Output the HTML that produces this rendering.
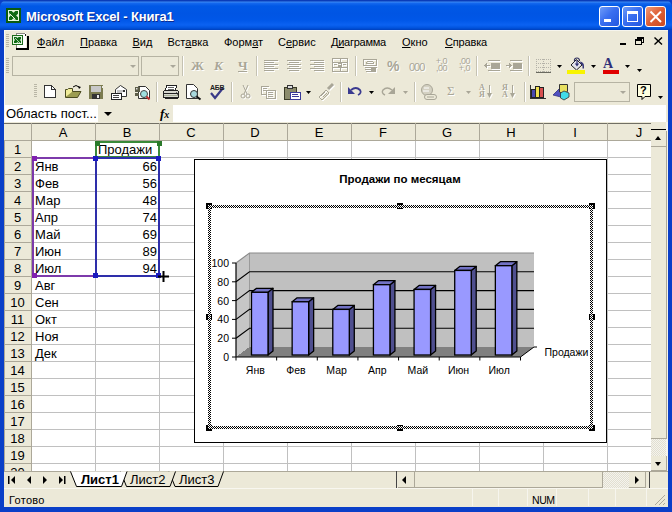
<!DOCTYPE html><html><head><meta charset="utf-8"><style>
*{margin:0;padding:0;box-sizing:border-box}
html,body{width:672px;height:512px;overflow:hidden;background:#0a3fc8;font-family:"Liberation Sans",sans-serif;font-size:11px;color:#000}
.a{position:absolute}
#title{left:0;top:0;width:672px;height:30px;border-radius:7px 7px 0 0;
 background:linear-gradient(#0a3cb8 0px,#0a3cb8 1px,#3d8cf5 2px,#1669ee 3px,#0058e6 6px,#0055e4 14px,#0057e8 20px,#0b62f2 25px,#0052dc 28px,#0040bc 30px)}
#ttext{left:26px;top:10px;color:#fff;font-weight:bold;font-size:13px;letter-spacing:-0.15px;text-shadow:1px 1px 0 #0c2a90;white-space:nowrap}
.wb{top:6px;width:21px;height:21px;border:1px solid #fff;border-radius:3px}
.t{white-space:nowrap;line-height:1}
.mi{top:37px;font-size:11px}
u{text-decoration-thickness:1px;text-underline-offset:1px}
.hl{height:1px;background:#c0c0c0}
.vl{width:1px;background:#c0c0c0}
.ch{top:126px;font-size:13px;text-align:center}
.rh{left:4px;width:27px;font-size:13px;text-align:center}
.c{font-size:13px}
.sep{width:2px;border-left:1px solid #c5c2b2;border-right:1px solid #fff}
.grip{width:3px;background:repeating-linear-gradient(#b9b6a6 0 1px,transparent 1px 2px)}
.dd{width:0;height:0;border-left:3px solid transparent;border-right:3px solid transparent;border-top:3px solid #000}
</style></head><body>
<div id="title" class="a">
<svg class="a" style="left:6px;top:8px" width="16" height="16" viewBox="0 0 16 16"><rect x="0" y="0" width="15" height="15" fill="#0a5a10"/><rect x="2" y="2" width="11" height="11" fill="#e6f6de"/><clipPath id="ic1"><rect x="3" y="3" width="9" height="9"/></clipPath><path d="M2 2L13 13M13 2L2 13" stroke="#0d6a14" stroke-width="3.8" clip-path="url(#ic1)"/><path d="M3.5 5.5L9.5 11.5" stroke="#e6f6de" stroke-width="1"/></svg>
<div id="ttext" class="a t">Microsoft Excel - Книга1</div>
<div class="a wb" style="left:599px;background:linear-gradient(135deg,#6f9cf8,#3a6ff0 45%,#2358e0)"><div class="a" style="left:4px;top:12px;width:7px;height:3px;background:#fff"></div></div>
<div class="a wb" style="left:622px;background:linear-gradient(135deg,#6f9cf8,#3a6ff0 45%,#2358e0)"><div class="a" style="left:4px;top:4px;width:11px;height:11px;border:1px solid #fff;border-top-width:3px"></div></div>
<div class="a wb" style="left:645px;background:linear-gradient(135deg,#f09a78,#dd5e34 50%,#c94a22)"><svg class="a" style="left:3px;top:3px" width="14" height="14"><path d="M1.5 1.5L12 12M12 1.5L1.5 12" stroke="#fff" stroke-width="2"/></svg></div>
</div>
<div class="a" style="left:4px;top:30px;width:664px;height:477px;background:#ece9d8;border-top:1px solid #f6f5ee"></div>
<div class="a grip" style="left:6px;top:34px;height:14px"></div>
<svg class="a" style="left:12px;top:33px" width="18" height="17" viewBox="0 0 18 17" shape-rendering="crispEdges"><rect x="4" y="0" width="10" height="15" fill="#fff"/><rect x="4" y="0" width="9" height="1" fill="#8a8a80"/><rect x="4" y="0" width="1" height="15" fill="#8a8a80"/><rect x="13" y="1" width="1" height="2" fill="#222"/><rect x="15" y="3" width="2" height="14" fill="#000"/><rect x="4" y="15" width="13" height="2" fill="#000"/><rect x="0" y="2" width="11" height="10" fill="#1a6a1a"/><rect x="1" y="3" width="9" height="8" fill="#e8f8e4"/><clipPath id="ic2"><rect x="2" y="4" width="7" height="6"/></clipPath><path d="M1 3L10 11M10 3L1 11" stroke="#0d6a14" stroke-width="3" clip-path="url(#ic2)" shape-rendering="geometricPrecision"/><path d="M3 5L8 10" stroke="#d8f0d4" stroke-width="0.8" shape-rendering="geometricPrecision"/></svg>
<div class="a t mi" style="left:37px;letter-spacing:0px"><u>Ф</u>айл</div>
<div class="a t mi" style="left:80px;letter-spacing:0px"><u>П</u>равка</div>
<div class="a t mi" style="left:132.5px;letter-spacing:0px"><u>В</u>ид</div>
<div class="a t mi" style="left:167.5px;letter-spacing:0px">Вст<u>а</u>вка</div>
<div class="a t mi" style="left:224px;letter-spacing:0px">Форм<u>а</u>т</div>
<div class="a t mi" style="left:278px;letter-spacing:0px">С<u>е</u>рвис</div>
<div class="a t mi" style="left:331px;letter-spacing:-0.25px">Д<u>и</u>аграмма</div>
<div class="a t mi" style="left:402px;letter-spacing:0px"><u>О</u>кно</div>
<div class="a t mi" style="left:445px;letter-spacing:-0.17px"><u>С</u>правка</div>
<div class="a" style="left:620px;top:43px;width:6px;height:2px;background:#000"></div>
<svg class="a" style="left:635px;top:37px" width="9" height="8"><rect x="2.5" y="0.5" width="6" height="5" fill="none" stroke="#000"/><rect x="2" y="0" width="7" height="2" fill="#000"/><rect x="0.5" y="2.5" width="6" height="5" fill="#ece9d8" stroke="#000"/><rect x="0" y="2" width="7" height="2" fill="#000"/></svg>
<svg class="a" style="left:654px;top:37px" width="9" height="8"><path d="M0.5 0.5L8 7.5M8 0.5L0.5 7.5" stroke="#000" stroke-width="1.4"/></svg>
<div class="a" style="left:5px;top:53px;width:643px;height:25px;background:#ece9d8"></div>
<div class="a grip" style="left:6px;top:58px;height:15px"></div>
<div class="a" style="left:12px;top:56px;width:127px;height:20px;border:1px solid #b6b3a3;background:#ece9d8"></div>
<div class="a" style="left:141px;top:56px;width:38px;height:20px;border:1px solid #b6b3a3;background:#ece9d8"></div>
<div class="a dd" style="left:130px;top:65px;border-top-color:#aaa79a"></div>
<div class="a dd" style="left:170px;top:65px;border-top-color:#aaa79a"></div>
<div class="a sep" style="left:182px;top:56px;height:20px"></div>
<div class="a sep" style="left:256px;top:56px;height:20px"></div>
<div class="a sep" style="left:355px;top:56px;height:20px"></div>
<div class="a sep" style="left:476px;top:56px;height:20px"></div>
<div class="a sep" style="left:528px;top:56px;height:20px"></div>
<div class="a" style="left:32px;top:79px;width:632px;height:25px;background:#ece9d8"></div>
<div class="a grip" style="left:34px;top:84px;height:14px"></div>
<div class="a sep" style="left:156px;top:82px;height:20px"></div>
<div class="a sep" style="left:231px;top:82px;height:20px"></div>
<div class="a sep" style="left:340px;top:82px;height:20px"></div>
<div class="a sep" style="left:414px;top:82px;height:20px"></div>
<div class="a sep" style="left:524px;top:82px;height:20px"></div>
<div class="a" style="left:574px;top:82px;width:56px;height:20px;border:1px solid #b6b3a3;background:#ece9d8"></div>
<div class="a dd" style="left:620px;top:91px;border-top-color:#aaa79a"></div>
<svg class="a" style="left:0;top:0" width="672" height="112" viewBox="0 0 672 112" shape-rendering="crispEdges">
<g transform="translate(1,1)" fill="#ffffff" stroke="none"><rect x="238" y="71" width="9" height="1"/></g>
<g fill="#a9a697" stroke="none"><rect x="238" y="71" width="9" height="1"/></g>
<g transform="translate(1,1)" fill="#ffffff" stroke="none"><rect x="264" y="60" width="14" height="1"/><rect x="264" y="62" width="10" height="1"/><rect x="264" y="64" width="14" height="1"/><rect x="264" y="66" width="10" height="1"/><rect x="264" y="68" width="14" height="1"/><rect x="264" y="70" width="10" height="1"/></g>
<g fill="#a9a697" stroke="none"><rect x="264" y="60" width="14" height="1"/><rect x="264" y="62" width="10" height="1"/><rect x="264" y="64" width="14" height="1"/><rect x="264" y="66" width="10" height="1"/><rect x="264" y="68" width="14" height="1"/><rect x="264" y="70" width="10" height="1"/></g>
<g transform="translate(1,1)" fill="#ffffff" stroke="none"><rect x="287" y="60" width="14" height="1"/><rect x="289" y="62" width="10" height="1"/><rect x="287" y="64" width="14" height="1"/><rect x="289" y="66" width="10" height="1"/><rect x="287" y="68" width="14" height="1"/><rect x="289" y="70" width="10" height="1"/></g>
<g fill="#a9a697" stroke="none"><rect x="287" y="60" width="14" height="1"/><rect x="289" y="62" width="10" height="1"/><rect x="287" y="64" width="14" height="1"/><rect x="289" y="66" width="10" height="1"/><rect x="287" y="68" width="14" height="1"/><rect x="289" y="70" width="10" height="1"/></g>
<g transform="translate(1,1)" fill="#ffffff" stroke="none"><rect x="310" y="60" width="14" height="1"/><rect x="314" y="62" width="10" height="1"/><rect x="310" y="64" width="14" height="1"/><rect x="314" y="66" width="10" height="1"/><rect x="310" y="68" width="14" height="1"/><rect x="314" y="70" width="10" height="1"/></g>
<g fill="#a9a697" stroke="none"><rect x="310" y="60" width="14" height="1"/><rect x="314" y="62" width="10" height="1"/><rect x="310" y="64" width="14" height="1"/><rect x="314" y="66" width="10" height="1"/><rect x="310" y="68" width="14" height="1"/><rect x="314" y="70" width="10" height="1"/></g>
<g transform="translate(1,1)" fill="#ffffff" stroke="none"><rect x="332" y="58" width="16" height="1"/><rect x="332" y="71" width="16" height="1"/><rect x="332" y="58" width="1" height="14"/><rect x="347" y="58" width="1" height="14"/><rect x="332" y="62" width="16" height="1"/><rect x="332" y="67" width="16" height="1"/><rect x="340" y="58" width="1" height="4"/><rect x="340" y="67" width="1" height="4"/><rect x="334" y="64" width="3" height="1"/><rect x="343" y="64" width="3" height="1"/><rect x="338" y="63" width="4" height="1"/><rect x="341" y="64" width="1" height="1"/><rect x="338" y="65" width="4" height="1"/><rect x="338" y="66" width="4" height="1"/></g>
<g fill="#a9a697" stroke="none"><rect x="332" y="58" width="16" height="1"/><rect x="332" y="71" width="16" height="1"/><rect x="332" y="58" width="1" height="14"/><rect x="347" y="58" width="1" height="14"/><rect x="332" y="62" width="16" height="1"/><rect x="332" y="67" width="16" height="1"/><rect x="340" y="58" width="1" height="4"/><rect x="340" y="67" width="1" height="4"/><rect x="334" y="64" width="3" height="1"/><rect x="343" y="64" width="3" height="1"/><rect x="338" y="63" width="4" height="1"/><rect x="341" y="64" width="1" height="1"/><rect x="338" y="65" width="4" height="1"/><rect x="338" y="66" width="4" height="1"/></g>
<g transform="translate(1,1)" fill="#ffffff" stroke="none"><rect x="363" y="59" width="14" height="1"/><rect x="363" y="59" width="1" height="7"/><rect x="376" y="59" width="1" height="7"/><rect x="363" y="65" width="14" height="1"/><rect x="367" y="61" width="6" height="1"/><rect x="366" y="62" width="1" height="2"/><rect x="373" y="62" width="1" height="2"/><rect x="367" y="63" width="6" height="1"/><rect x="365" y="67" width="12" height="1"/><rect x="365" y="69" width="6" height="1"/><rect x="371" y="68" width="5" height="4"/><rect x="366" y="71" width="5" height="1"/></g>
<g fill="#a9a697" stroke="none"><rect x="363" y="59" width="14" height="1"/><rect x="363" y="59" width="1" height="7"/><rect x="376" y="59" width="1" height="7"/><rect x="363" y="65" width="14" height="1"/><rect x="367" y="61" width="6" height="1"/><rect x="366" y="62" width="1" height="2"/><rect x="373" y="62" width="1" height="2"/><rect x="367" y="63" width="6" height="1"/><rect x="365" y="67" width="12" height="1"/><rect x="365" y="69" width="6" height="1"/><rect x="371" y="68" width="5" height="4"/><rect x="366" y="71" width="5" height="1"/></g>
<g transform="translate(1,1)" fill="#ffffff" stroke="none"><rect x="488" y="60" width="12" height="1"/><rect x="488" y="70" width="12" height="1"/><rect x="491" y="63" width="9" height="2"/><rect x="491" y="65" width="9" height="2"/><rect x="491" y="67" width="9" height="2"/><rect x="484" y="65" width="6" height="1"/><rect x="485" y="64" width="1" height="3"/><rect x="486" y="63" width="1" height="5"/></g>
<g fill="#a9a697" stroke="none"><rect x="488" y="60" width="12" height="1"/><rect x="488" y="70" width="12" height="1"/><rect x="491" y="63" width="9" height="2"/><rect x="491" y="65" width="9" height="2"/><rect x="491" y="67" width="9" height="2"/><rect x="484" y="65" width="6" height="1"/><rect x="485" y="64" width="1" height="3"/><rect x="486" y="63" width="1" height="5"/></g>
<g transform="translate(1,1)" fill="#ffffff" stroke="none"><rect x="510" y="60" width="12" height="1"/><rect x="510" y="70" width="12" height="1"/><rect x="513" y="63" width="9" height="2"/><rect x="513" y="65" width="9" height="2"/><rect x="513" y="67" width="9" height="2"/><rect x="506" y="65" width="6" height="1"/><rect x="510" y="64" width="1" height="3"/><rect x="509" y="63" width="1" height="5"/></g>
<g fill="#a9a697" stroke="none"><rect x="510" y="60" width="12" height="1"/><rect x="510" y="70" width="12" height="1"/><rect x="513" y="63" width="9" height="2"/><rect x="513" y="65" width="9" height="2"/><rect x="513" y="67" width="9" height="2"/><rect x="506" y="65" width="6" height="1"/><rect x="510" y="64" width="1" height="3"/><rect x="509" y="63" width="1" height="5"/></g>
<g fill="#b4b2a8"><rect x="536" y="59" width="1" height="1"/><rect x="538" y="59" width="1" height="1"/><rect x="540" y="59" width="1" height="1"/><rect x="542" y="59" width="1" height="1"/><rect x="544" y="59" width="1" height="1"/><rect x="546" y="59" width="1" height="1"/><rect x="548" y="59" width="1" height="1"/><rect x="550" y="59" width="1" height="1"/><rect x="536" y="63" width="1" height="1"/><rect x="538" y="63" width="1" height="1"/><rect x="540" y="63" width="1" height="1"/><rect x="542" y="63" width="1" height="1"/><rect x="544" y="63" width="1" height="1"/><rect x="546" y="63" width="1" height="1"/><rect x="548" y="63" width="1" height="1"/><rect x="550" y="63" width="1" height="1"/><rect x="536" y="67" width="1" height="1"/><rect x="538" y="67" width="1" height="1"/><rect x="540" y="67" width="1" height="1"/><rect x="542" y="67" width="1" height="1"/><rect x="544" y="67" width="1" height="1"/><rect x="546" y="67" width="1" height="1"/><rect x="548" y="67" width="1" height="1"/><rect x="550" y="67" width="1" height="1"/><rect x="536" y="71" width="1" height="1"/><rect x="538" y="71" width="1" height="1"/><rect x="540" y="71" width="1" height="1"/><rect x="542" y="71" width="1" height="1"/><rect x="544" y="71" width="1" height="1"/><rect x="546" y="71" width="1" height="1"/><rect x="548" y="71" width="1" height="1"/><rect x="550" y="71" width="1" height="1"/><rect x="536" y="59" width="1" height="1"/><rect x="536" y="61" width="1" height="1"/><rect x="536" y="63" width="1" height="1"/><rect x="536" y="65" width="1" height="1"/><rect x="536" y="67" width="1" height="1"/><rect x="536" y="69" width="1" height="1"/><rect x="536" y="71" width="1" height="1"/><rect x="543" y="59" width="1" height="1"/><rect x="543" y="61" width="1" height="1"/><rect x="543" y="63" width="1" height="1"/><rect x="543" y="65" width="1" height="1"/><rect x="543" y="67" width="1" height="1"/><rect x="543" y="69" width="1" height="1"/><rect x="543" y="71" width="1" height="1"/><rect x="550" y="59" width="1" height="1"/><rect x="550" y="61" width="1" height="1"/><rect x="550" y="63" width="1" height="1"/><rect x="550" y="65" width="1" height="1"/><rect x="550" y="67" width="1" height="1"/><rect x="550" y="69" width="1" height="1"/><rect x="550" y="71" width="1" height="1"/></g>
<rect x="536" y="72" width="15" height="1" fill="#6a6a60"/>
<polygon points="557,65 562,65 559.5,68" fill="#000" shape-rendering="geometricPrecision"/>
<polygon points="591,65 596,65 593.5,68" fill="#000" shape-rendering="geometricPrecision"/>
<polygon points="625,65 630,65 627.5,68" fill="#000" shape-rendering="geometricPrecision"/>
<polygon points="637,69 642,69 639.5,72" fill="#000" shape-rendering="geometricPrecision"/>
<polygon points="306,91 311,91 308.5,94" fill="#000" shape-rendering="geometricPrecision"/>
<polygon points="369,91 374,91 371.5,94" fill="#000" shape-rendering="geometricPrecision"/>
<polygon points="658,96 663,96 660.5,99" fill="#000" shape-rendering="geometricPrecision"/>
<polygon points="403,91 408,91 405.5,94" fill="#a9a697" shape-rendering="geometricPrecision"/>
<polygon points="466,91 471,91 468.5,94" fill="#a9a697" shape-rendering="geometricPrecision"/>
<g shape-rendering="geometricPrecision"><polygon points="571,65 576.5,59.5 582,65 576.5,70" fill="#e4e4ec" stroke="#222" stroke-width="1"/><path d="M574.5 61.5 Q574 58 577 58 Q579.5 58 579.5 61" fill="none" stroke="#303060" stroke-width="1.2"/><path d="M577 60V65M575.5 63.5L577 65.5L578.5 63.5" stroke="#303070" fill="none" stroke-width="1.2"/><path d="M580 61.5Q584 62 584 66V68.5H582.5V66Q582 64 580.5 63.5Z" fill="#38387a"/></g>
<rect x="567" y="70" width="18" height="4" fill="#f8f400"/>
<rect x="603" y="70" width="16" height="4" fill="#e00000"/>
<path d="M44.5 85.5H51.5L55.5 89.5V97.5H44.5Z" fill="#fff" stroke="#333"/><path d="M51.5 85.5V89.5H55.5" fill="none" stroke="#333"/>
<g shape-rendering="geometricPrecision"><path d="M65.5 90.5V97.5H77.5L81 91.5H68.5L65.5 97" fill="#9c9c50" stroke="#4a4a20"/><path d="M65.5 97V89.5H67.5L68.5 88.5H72.5V91.5" fill="#f0ec98" stroke="#4a4a20"/><path d="M73 87 q3 -3 6 0" fill="none" stroke="#000"/><polygon points="78,86 81,87 79,89" fill="#000"/></g>
<rect x="89" y="85" width="14" height="14" fill="#7c7c50"/><rect x="91" y="86" width="10" height="6" fill="#c8c8c8"/><rect x="92" y="94" width="8" height="5" fill="#333"/><rect x="97" y="95" width="2" height="3" fill="#e8e8e8"/><rect x="102" y="86" width="1" height="2" fill="#e8e8e8"/>
<g shape-rendering="geometricPrecision"><path d="M115.5 89.5L120.5 85.5L126.5 89.5V96.5H115.5Z" fill="#fff" stroke="#333"/><path d="M117 91h7M117 93h5" stroke="#888"/><rect x="111.5" y="93.5" width="10" height="6" fill="#fff" stroke="#222"/><path d="M113 95.5h6M113 97.5h6" stroke="#444"/><rect x="123" y="90" width="2" height="2" fill="#333"/></g>
<g shape-rendering="geometricPrecision"><path d="M138.5 86.5H145.5L149.5 90.5V98.5H138.5Z" fill="#fff" stroke="#333"/><rect x="135" y="87" width="5" height="5" fill="#5c5c48"/><rect x="136" y="88" width="1.5" height="1.5" fill="#ddd"/><rect x="135" y="93" width="4" height="3" fill="#5c5c48"/><circle cx="144" cy="94" r="3.5" fill="#9fe0e0" stroke="#444"/><path d="M146.5 96.5L149.5 99.5" stroke="#c03030" stroke-width="2"/></g>
<path d="M166.5 85.5H176.5L175.5 90.5H165.5Z" fill="#fff" stroke="#222"/><path d="M168 87.5h6M167.5 89h6" stroke="#666"/><path d="M163.5 92.5Q163.5 90.5 165.5 90.5H177.5Q178.5 90.5 178.5 92.5V97.5H163.5Z" fill="#d8d8d0" stroke="#222"/><rect x="164" y="93" width="14" height="1" fill="#222"/><rect x="164" y="95" width="14" height="1" fill="#a8b098"/><rect x="164.5" y="97.5" width="13" height="1" fill="#222"/><rect x="176" y="92" width="1" height="1" fill="#666"/><rect x="177" y="94" width="1" height="1" fill="#666"/>
<g shape-rendering="geometricPrecision"><path d="M186.5 84.5H193.5L197.5 88.5V98.5H186.5Z" fill="#fff" stroke="#333"/><circle cx="194" cy="94" r="3.5" fill="#a8d8dc" stroke="#333"/><path d="M196.5 96.5L200.5 99.5" stroke="#111" stroke-width="2"/></g>
<path d="M211 93L215 98L223 88" fill="none" stroke="#3a3a88" stroke-width="2.2" shape-rendering="geometricPrecision"/>
<g shape-rendering="geometricPrecision" fill="none"><g transform="translate(1,1)" stroke="#fff"><path d="M243 85L247 94M248 85L244 94"/><circle cx="243" cy="96" r="2"/><circle cx="248" cy="96" r="2"/></g><g stroke="#a9a697"><path d="M243 85L247 94M248 85L244 94"/><circle cx="243" cy="96" r="2"/><circle cx="248" cy="96" r="2"/></g></g>
<g transform="translate(1,1)" fill="#ffffff" stroke="none"><rect x="261" y="86" width="8" height="1"/><rect x="261" y="86" width="1" height="9"/><rect x="261" y="94" width="5" height="1"/><rect x="263" y="88" width="4" height="1"/><rect x="263" y="90" width="4" height="1"/><rect x="266" y="90" width="9" height="1"/><rect x="266" y="90" width="1" height="9"/><rect x="266" y="98" width="9" height="1"/><rect x="275" y="90" width="1" height="9"/><rect x="268" y="92" width="5" height="1"/><rect x="268" y="94" width="5" height="1"/><rect x="268" y="96" width="5" height="1"/></g>
<g fill="#a9a697" stroke="none"><rect x="261" y="86" width="8" height="1"/><rect x="261" y="86" width="1" height="9"/><rect x="261" y="94" width="5" height="1"/><rect x="263" y="88" width="4" height="1"/><rect x="263" y="90" width="4" height="1"/><rect x="266" y="90" width="9" height="1"/><rect x="266" y="90" width="1" height="9"/><rect x="266" y="98" width="9" height="1"/><rect x="275" y="90" width="1" height="9"/><rect x="268" y="92" width="5" height="1"/><rect x="268" y="94" width="5" height="1"/><rect x="268" y="96" width="5" height="1"/></g>
<rect x="284" y="87" width="12" height="12" fill="#8c8c6c" stroke="#3c3c28"/><rect x="287.5" y="85.5" width="5" height="3" fill="#ddd" stroke="#333"/><rect x="290.5" y="92.5" width="10" height="7" fill="#fff" stroke="#3a3a9a"/><rect x="292" y="94" width="6" height="1" fill="#3a3a9a"/><rect x="292" y="96" width="7" height="1" fill="#3a3a9a"/>
<g shape-rendering="geometricPrecision"><g transform="translate(1,1)"><path d="M319 97L326 90L329 93L322 100Z" fill="none" stroke="#fff"/><path d="M328 89L333 84" stroke="#fff" stroke-width="3"/></g><path d="M319 97L326 90L329 93L322 100Z" fill="none" stroke="#a9a697"/><path d="M321 96l4-4M323 97l4-4" stroke="#a9a697"/><path d="M328 89L333 84" stroke="#a9a697" stroke-width="3"/></g>
<g shape-rendering="geometricPrecision"><path d="M351 90 q5 -4 9 0 q2 3 -2 5" fill="none" stroke="#3a3a90" stroke-width="1.8"/><polygon points="348,87 348,94 355,94" fill="#3a3a90"/></g>
<g shape-rendering="geometricPrecision"><path d="M392 90 q-5 -4 -9 0 q-2 3 2 5" fill="none" stroke="#a9a697" stroke-width="1.4"/><polygon points="395,87 395,94 388,94" fill="#a9a697"/></g>
<g shape-rendering="geometricPrecision" fill="none"><circle cx="427" cy="90" r="5.5" stroke="#a9a697" fill="#d4d1c2"/><path d="M424 88h5M423 91h6" stroke="#fff"/><rect x="424.5" y="94.5" width="12" height="5" rx="2.5" stroke="#a9a697" fill="#ece9d8"/><path d="M427 97h7" stroke="#a9a697"/></g>
<g transform="translate(1,1)" fill="#ffffff" stroke="none"><rect x="489" y="85" width="1" height="11"/><polygon points="487,93 492,93 489.5,98" shape-rendering="geometricPrecision"/></g>
<g fill="#a9a697" stroke="none"><rect x="489" y="85" width="1" height="11"/><polygon points="487,93 492,93 489.5,98" shape-rendering="geometricPrecision"/></g>
<g transform="translate(1,1)" fill="#ffffff" stroke="none"><rect x="512" y="85" width="1" height="11"/><polygon points="510,93 515,93 512.5,98" shape-rendering="geometricPrecision"/></g>
<g fill="#a9a697" stroke="none"><rect x="512" y="85" width="1" height="11"/><polygon points="510,93 515,93 512.5,98" shape-rendering="geometricPrecision"/></g>
<rect x="530" y="85" width="1" height="14" fill="#333"/><rect x="530" y="98" width="16" height="1" fill="#333"/><rect x="531.5" y="89.5" width="4" height="8" fill="#4848b0" stroke="#222"/><rect x="535.5" y="86.5" width="4" height="11" fill="#f0e050" stroke="#222"/><rect x="539.5" y="87.5" width="4" height="10" fill="#d85050" stroke="#222"/>
<g shape-rendering="geometricPrecision"><polygon points="553,95 560,88 561,97" fill="#5050c0" stroke="#303080" stroke-width="0.8"/><polygon points="559.5,84.5 567.5,84.5 567.5,91.5 563,94 559.5,92" fill="#e8e060" stroke="#333" stroke-width="1"/><polygon points="560.5,93 564,91 569,93 569,97 564,100 560.5,98" fill="#40dce8" stroke="#333" stroke-width="0.8"/></g>
<g shape-rendering="geometricPrecision"><path d="M637.5 84.5H650.5V96.5H645L642 99.5V96.5H637.5Z" fill="#ffffe0" stroke="#000"/></g>
</svg>
<div class="a t" style="left:192px;top:60px;color:#fff;font-family:'Liberation Serif',serif;font-weight:bold;font-size:13px">Ж</div>
<div class="a t" style="left:191px;top:59px;color:#a9a697;font-family:'Liberation Serif',serif;font-weight:bold;font-size:13px">Ж</div>
<div class="a t" style="left:215px;top:60px;color:#fff;font-family:'Liberation Serif',serif;font-weight:bold;font-style:italic;font-size:13px">К</div>
<div class="a t" style="left:214px;top:59px;color:#a9a697;font-family:'Liberation Serif',serif;font-weight:bold;font-style:italic;font-size:13px">К</div>
<div class="a t" style="left:239px;top:60px;color:#fff;font-family:'Liberation Serif',serif;font-weight:bold;font-size:13px">Ч</div>
<div class="a t" style="left:238px;top:59px;color:#a9a697;font-family:'Liberation Serif',serif;font-weight:bold;font-size:13px">Ч</div>
<div class="a t" style="left:388px;top:60px;color:#fff;font-size:14px;font-weight:bold">%</div>
<div class="a t" style="left:387px;top:59px;color:#a9a697;font-size:14px;font-weight:bold">%</div>
<div class="a t" style="left:410px;top:63px;color:#fff;font-size:11px;letter-spacing:-1px">000</div>
<div class="a t" style="left:409px;top:62px;color:#a9a697;font-size:11px;letter-spacing:-1px">000</div>
<div class="a t" style="left:433px;top:59px;color:#fff;font-size:9px;line-height:7px;letter-spacing:-0.5px;width:15px;text-align:right">+,0<br>,00</div>
<div class="a t" style="left:432px;top:58px;color:#a9a697;font-size:9px;line-height:7px;letter-spacing:-0.5px;width:15px;text-align:right">+,0<br>,00</div>
<div class="a t" style="left:456px;top:59px;color:#fff;font-size:9px;line-height:7px;letter-spacing:-0.5px;width:15px;text-align:right">,00<br>+,0</div>
<div class="a t" style="left:455px;top:58px;color:#a9a697;font-size:9px;line-height:7px;letter-spacing:-0.5px;width:15px;text-align:right">,00<br>+,0</div>
<div class="a t" style="left:603px;top:57px;color:#303078;font-family:'Liberation Serif',serif;font-weight:bold;font-size:14px">A</div>
<div class="a t" style="left:210px;top:84px;color:#222;font-size:7px;font-weight:bold;letter-spacing:-0.3px">АБВ</div>
<div class="a t" style="left:448px;top:85px;color:#fff;font-size:13px;font-family:'Liberation Serif',serif">&Sigma;</div>
<div class="a t" style="left:447px;top:84px;color:#a9a697;font-size:13px;font-family:'Liberation Serif',serif">&Sigma;</div>
<div class="a t" style="left:480px;top:85px;color:#fff;font-size:8px;line-height:7px;font-family:'Liberation Serif',serif;font-weight:bold">А<br>Я</div>
<div class="a t" style="left:479px;top:84px;color:#a9a697;font-size:8px;line-height:7px;font-family:'Liberation Serif',serif;font-weight:bold">А<br>Я</div>
<div class="a t" style="left:503px;top:85px;color:#fff;font-size:8px;line-height:7px;font-family:'Liberation Serif',serif;font-weight:bold">Я<br>А</div>
<div class="a t" style="left:502px;top:84px;color:#a9a697;font-size:8px;line-height:7px;font-family:'Liberation Serif',serif;font-weight:bold">Я<br>А</div>
<div class="a t" style="left:640px;top:85px;color:#000;font-size:11px;font-weight:bold">?</div>
<div class="a" style="left:4px;top:104px;width:664px;height:19px;background:#ece9d8"></div>
<div class="a" style="left:5px;top:105px;width:93px;height:17px;background:#fff"></div>
<div class="a t c" style="left:6px;top:107px;">Область пост...</div>
<div class="a dd" style="left:104px;top:112px;border-left-width:4px;border-right-width:4px;border-top-width:4px"></div>
<div class="a t" style="left:160px;top:108px;font-family:'Liberation Serif',serif;font-style:italic;font-weight:bold;font-size:13px;top:107px">f<span style="font-size:10px">x</span></div>
<div class="a" style="left:173px;top:105px;width:493px;height:17px;background:#fff"></div>
<div class="a" style="left:4px;top:31px;width:1px;height:91px;background:#f8f8f4"></div>
<div class="a" style="left:4px;top:123px;width:647px;height:348px;background:#fff"></div>
<div class="a" style="left:4px;top:123px;width:647px;height:18px;background:#ece9d8;border-top:1px solid #716f64;border-bottom:1px solid #aca899"></div>
<div class="a" style="left:4px;top:141px;width:28px;height:330px;background:#ece9d8;border-left:1px solid #aca899;border-right:1px solid #aca899"></div>
<div class="a" style="left:31px;top:123px;width:1px;height:18px;background:#aca899"></div>
<div class="a vl" style="left:95px;top:123px;height:17px;background:#aca899"></div>
<div class="a vl" style="left:95px;top:141px;height:330px"></div>
<div class="a t ch" style="left:31px;width:64px">A</div>
<div class="a vl" style="left:159px;top:123px;height:17px;background:#aca899"></div>
<div class="a vl" style="left:159px;top:141px;height:330px"></div>
<div class="a t ch" style="left:95px;width:64px">B</div>
<div class="a vl" style="left:223px;top:123px;height:17px;background:#aca899"></div>
<div class="a vl" style="left:223px;top:141px;height:330px"></div>
<div class="a t ch" style="left:159px;width:64px">C</div>
<div class="a vl" style="left:287px;top:123px;height:17px;background:#aca899"></div>
<div class="a vl" style="left:287px;top:141px;height:330px"></div>
<div class="a t ch" style="left:223px;width:64px">D</div>
<div class="a vl" style="left:351px;top:123px;height:17px;background:#aca899"></div>
<div class="a vl" style="left:351px;top:141px;height:330px"></div>
<div class="a t ch" style="left:287px;width:64px">E</div>
<div class="a vl" style="left:415px;top:123px;height:17px;background:#aca899"></div>
<div class="a vl" style="left:415px;top:141px;height:330px"></div>
<div class="a t ch" style="left:351px;width:64px">F</div>
<div class="a vl" style="left:479px;top:123px;height:17px;background:#aca899"></div>
<div class="a vl" style="left:479px;top:141px;height:330px"></div>
<div class="a t ch" style="left:415px;width:64px">G</div>
<div class="a vl" style="left:543px;top:123px;height:17px;background:#aca899"></div>
<div class="a vl" style="left:543px;top:141px;height:330px"></div>
<div class="a t ch" style="left:479px;width:64px">H</div>
<div class="a vl" style="left:607px;top:123px;height:17px;background:#aca899"></div>
<div class="a vl" style="left:607px;top:141px;height:330px"></div>
<div class="a t ch" style="left:543px;width:64px">I</div>
<div class="a t ch" style="left:607px;width:64px">J</div>
<div class="a hl" style="left:4px;top:157px;width:28px;background:#aca899"></div>
<div class="a hl" style="left:32px;top:157px;width:619px"></div>
<div class="a t rh" style="top:143px">1</div>
<div class="a hl" style="left:4px;top:174px;width:28px;background:#aca899"></div>
<div class="a hl" style="left:32px;top:174px;width:619px"></div>
<div class="a t rh" style="top:160px">2</div>
<div class="a hl" style="left:4px;top:191px;width:28px;background:#aca899"></div>
<div class="a hl" style="left:32px;top:191px;width:619px"></div>
<div class="a t rh" style="top:177px">3</div>
<div class="a hl" style="left:4px;top:208px;width:28px;background:#aca899"></div>
<div class="a hl" style="left:32px;top:208px;width:619px"></div>
<div class="a t rh" style="top:194px">4</div>
<div class="a hl" style="left:4px;top:225px;width:28px;background:#aca899"></div>
<div class="a hl" style="left:32px;top:225px;width:619px"></div>
<div class="a t rh" style="top:211px">5</div>
<div class="a hl" style="left:4px;top:242px;width:28px;background:#aca899"></div>
<div class="a hl" style="left:32px;top:242px;width:619px"></div>
<div class="a t rh" style="top:228px">6</div>
<div class="a hl" style="left:4px;top:259px;width:28px;background:#aca899"></div>
<div class="a hl" style="left:32px;top:259px;width:619px"></div>
<div class="a t rh" style="top:245px">7</div>
<div class="a hl" style="left:4px;top:276px;width:28px;background:#aca899"></div>
<div class="a hl" style="left:32px;top:276px;width:619px"></div>
<div class="a t rh" style="top:262px">8</div>
<div class="a hl" style="left:4px;top:293px;width:28px;background:#aca899"></div>
<div class="a hl" style="left:32px;top:293px;width:619px"></div>
<div class="a t rh" style="top:279px">9</div>
<div class="a hl" style="left:4px;top:310px;width:28px;background:#aca899"></div>
<div class="a hl" style="left:32px;top:310px;width:619px"></div>
<div class="a t rh" style="top:296px">10</div>
<div class="a hl" style="left:4px;top:327px;width:28px;background:#aca899"></div>
<div class="a hl" style="left:32px;top:327px;width:619px"></div>
<div class="a t rh" style="top:313px">11</div>
<div class="a hl" style="left:4px;top:344px;width:28px;background:#aca899"></div>
<div class="a hl" style="left:32px;top:344px;width:619px"></div>
<div class="a t rh" style="top:330px">12</div>
<div class="a hl" style="left:4px;top:361px;width:28px;background:#aca899"></div>
<div class="a hl" style="left:32px;top:361px;width:619px"></div>
<div class="a t rh" style="top:347px">13</div>
<div class="a hl" style="left:4px;top:378px;width:28px;background:#aca899"></div>
<div class="a hl" style="left:32px;top:378px;width:619px"></div>
<div class="a t rh" style="top:364px">14</div>
<div class="a hl" style="left:4px;top:395px;width:28px;background:#aca899"></div>
<div class="a hl" style="left:32px;top:395px;width:619px"></div>
<div class="a t rh" style="top:381px">15</div>
<div class="a hl" style="left:4px;top:412px;width:28px;background:#aca899"></div>
<div class="a hl" style="left:32px;top:412px;width:619px"></div>
<div class="a t rh" style="top:398px">16</div>
<div class="a hl" style="left:4px;top:429px;width:28px;background:#aca899"></div>
<div class="a hl" style="left:32px;top:429px;width:619px"></div>
<div class="a t rh" style="top:415px">17</div>
<div class="a hl" style="left:4px;top:446px;width:28px;background:#aca899"></div>
<div class="a hl" style="left:32px;top:446px;width:619px"></div>
<div class="a t rh" style="top:432px">18</div>
<div class="a hl" style="left:4px;top:463px;width:28px;background:#aca899"></div>
<div class="a hl" style="left:32px;top:463px;width:619px"></div>
<div class="a t rh" style="top:449px">19</div>
<div class="a hl" style="left:4px;top:480px;width:28px;background:#aca899"></div>
<div class="a hl" style="left:32px;top:480px;width:619px"></div>
<div class="a t rh" style="top:466px">20</div>
<div class="a t c" style="left:35px;top:160px">Янв</div>
<div class="a t c" style="left:35px;top:177px">Фев</div>
<div class="a t c" style="left:35px;top:194px">Мар</div>
<div class="a t c" style="left:35px;top:211px">Апр</div>
<div class="a t c" style="left:35px;top:228px">Май</div>
<div class="a t c" style="left:35px;top:245px">Июн</div>
<div class="a t c" style="left:35px;top:262px">Июл</div>
<div class="a t c" style="left:35px;top:279px">Авг</div>
<div class="a t c" style="left:35px;top:296px">Сен</div>
<div class="a t c" style="left:35px;top:313px">Окт</div>
<div class="a t c" style="left:35px;top:330px">Ноя</div>
<div class="a t c" style="left:35px;top:347px">Дек</div>
<div class="a t c" style="left:96px;width:61px;text-align:right;top:160px">66</div>
<div class="a t c" style="left:96px;width:61px;text-align:right;top:177px">56</div>
<div class="a t c" style="left:96px;width:61px;text-align:right;top:194px">48</div>
<div class="a t c" style="left:96px;width:61px;text-align:right;top:211px">74</div>
<div class="a t c" style="left:96px;width:61px;text-align:right;top:228px">69</div>
<div class="a t c" style="left:96px;width:61px;text-align:right;top:245px">89</div>
<div class="a t c" style="left:96px;width:61px;text-align:right;top:262px">94</div>
<div class="a t c" style="left:98px;top:143px">Продажи</div>
<div class="a" style="left:32px;top:157px;width:65px;height:120px;border:2px solid #7d3aab"></div>
<div class="a" style="left:95px;top:141px;width:65px;height:17px;border:2px solid #3a8a3a"></div>
<div class="a" style="left:95px;top:157px;width:65px;height:120px;border:2px solid #2e2eaa"></div>
<div class="a" style="left:95px;top:141px;width:5px;height:5px;background:#2a7a2a"></div>
<div class="a" style="left:157px;top:141px;width:5px;height:5px;background:#2a7a2a"></div>
<div class="a" style="left:93px;top:156px;width:5px;height:5px;background:#1a1ac0"></div>
<div class="a" style="left:156px;top:156px;width:5px;height:5px;background:#1a1ac0"></div>
<div class="a" style="left:93px;top:273px;width:5px;height:5px;background:#1a1ac0"></div>
<div class="a" style="left:156px;top:273px;width:5px;height:5px;background:#1a1ac0"></div>
<div class="a" style="left:32px;top:156px;width:5px;height:5px;background:#8020b0"></div>
<div class="a" style="left:32px;top:273px;width:5px;height:5px;background:#8020b0"></div>
<svg class="a" style="left:158px;top:271px" width="11" height="11"><path d="M5.5 0V11M0 5.5H11" stroke="#000" stroke-width="2"/></svg>
<div class="a" style="left:651px;top:141px;width:17px;height:330px;background:repeating-conic-gradient(#f4f3ee 0 25%,#e2dfd0 0 50%) 0 0/2px 2px"></div>
<div class="a" style="left:666px;top:122px;width:2px;height:349px;background:#f4f3ee"></div>
<div class="a" style="left:651px;top:129px;width:15px;height:1px;background:#000"></div>
<div class="a" style="left:651px;top:131px;width:16px;height:16px;background:#ece9d8;border-right:1px solid #aca899;border-bottom:1px solid #aca899"></div>
<div class="a" style="left:655px;top:136px;width:0;height:0;border-left:3.5px solid transparent;border-right:3.5px solid transparent;border-bottom:4px solid #000"></div>
<div class="a" style="left:651px;top:147px;width:16px;height:292px;background:#ece9d8;border-right:1px solid #aca899;border-bottom:1px solid #aca899"></div>
<div class="a" style="left:651px;top:456px;width:16px;height:15px;background:#ece9d8;border-right:1px solid #aca899;border-bottom:1px solid #aca899"></div>
<div class="a dd" style="left:655px;top:462px;border-left-width:3.5px;border-right-width:3.5px;border-top-width:4px"></div>
<div class="a" style="left:4px;top:471px;width:664px;height:17px;background:#ece9d8;border-top:1px solid #aca899"></div>
<svg class="a" style="left:8px;top:476px" width="60" height="8"><path d="M0 0h1.5v8H0zM7 0v8L3 4z" fill="#000"/><path d="M23 0v8L19 4z" fill="#000"/><path d="M35 0v8l4-4z" fill="#000"/><path d="M51 0v8l4-4zM56 0h1.5v8H56z" fill="#000"/></svg>
<svg class="a" style="left:0;top:471px" width="240" height="17" viewBox="0 471 240 17" shape-rendering="geometricPrecision"><path d="M169 471.5L175 486.5H218L223.5 471.5" fill="#ece9d8" stroke="#000" stroke-width="1"/><path d="M120.5 471.5L126.5 486.5H170L175.5 471.5" fill="#ece9d8" stroke="#000" stroke-width="1"/><path d="M70.5 471.5L76.5 486.5H121.5L127 471.5" fill="#fff" stroke="#000" stroke-width="1"/></svg>
<div class="a t" style="left:81px;top:473px;font-size:13px;font-weight:bold">Лист1</div>
<div class="a t" style="left:130px;top:473px;font-size:13px">Лист2</div>
<div class="a t" style="left:179px;top:473px;font-size:13px">Лист3</div>
<div class="a" style="left:396px;top:471px;width:1px;height:17px;background:#444"></div>
<div class="a" style="left:398px;top:472px;width:17px;height:16px;background:#ece9d8;border-right:1px solid #aca899;border-bottom:1px solid #aca899"></div>
<div class="a" style="left:402px;top:476px;width:0;height:0;border-top:4px solid transparent;border-bottom:4px solid transparent;border-right:4px solid #000"></div>
<div class="a" style="left:415px;top:472px;width:188px;height:16px;background:#ece9d8;border-right:1px solid #aca899;border-bottom:1px solid #aca899"></div>
<div class="a" style="left:603px;top:472px;width:27px;height:16px;background:repeating-conic-gradient(#f4f3ee 0 25%,#e2dfd0 0 50%) 0 0/2px 2px"></div>
<div class="a" style="left:629px;top:472px;width:17px;height:16px;background:#ece9d8;border-right:1px solid #aca899;border-bottom:1px solid #aca899"></div>
<div class="a" style="left:635px;top:476px;width:0;height:0;border-top:4px solid transparent;border-bottom:4px solid transparent;border-left:4px solid #000"></div>
<div class="a" style="left:649px;top:472px;width:1px;height:16px;background:#444"></div>
<div class="a" style="left:4px;top:488px;width:664px;height:19px;background:#ece9d8;border-top:1px solid #f8f7f0"></div>
<div class="a t" style="left:9px;top:495px;font-size:11px;letter-spacing:0.3px">Готово</div>
<div class="a t" style="left:532px;top:495px;font-size:10.5px;letter-spacing:-0.4px">NUM</div>
<div class="a" style="left:472px;top:489px;width:1px;height:17px;background:#f6f5ee"></div>
<div class="a" style="left:498px;top:489px;width:1px;height:17px;background:#f6f5ee"></div>
<div class="a" style="left:527px;top:489px;width:1px;height:17px;background:#f6f5ee"></div>
<div class="a" style="left:556px;top:489px;width:1px;height:17px;background:#f6f5ee"></div>
<div class="a" style="left:588px;top:489px;width:1px;height:17px;background:#f6f5ee"></div>
<div class="a" style="left:615px;top:489px;width:1px;height:17px;background:#f6f5ee"></div>
<div class="a" style="left:646px;top:489px;width:1px;height:17px;background:#f6f5ee"></div>
<svg class="a" style="left:654px;top:494px" width="12" height="12"><path d="M11 1L1 11M11 5L5 11M11 9L9 11" stroke="#aca899" stroke-width="1"/></svg>
<div class="a" style="left:194px;top:159px;width:413px;height:284px;background:#fff;border:1px solid #000"></div>
<svg class="a" style="left:0;top:0" width="672" height="512" viewBox="0 0 672 512" shape-rendering="crispEdges">
<defs><pattern id="chk" x="0" y="0" width="2" height="2" patternUnits="userSpaceOnUse"><rect width="2" height="2" fill="#fff"/><rect width="1" height="1" fill="#000"/><rect x="1" y="1" width="1" height="1" fill="#000"/></pattern></defs>
<polygon points="236,263.0 249.5,253.0 249.5,347 236,357" fill="#c6c6c6"/>
<rect x="249.5" y="253.0" width="284.5" height="94.0" fill="#c0c0c0"/>
<polygon points="236,357 249.5,347 534.0,347 520.5,357" fill="#808080"/>
</svg>
<svg class="a" style="left:0;top:0" width="672" height="512" viewBox="0 0 672 512">
<line x1="249.5" y1="253.0" x2="249.5" y2="347" stroke="#9a9a9a" stroke-width="1"/>
<polyline points="236,338.2 249.5,328.2 534.0,328.2" fill="none" stroke="#000" stroke-width="1.1"/>
<line x1="232" y1="338.2" x2="236" y2="338.2" stroke="#000" stroke-width="1"/>
<text x="229" y="342.2" text-anchor="end" font-size="10.5" font-family="Liberation Sans">20</text>
<polyline points="236,319.4 249.5,309.4 534.0,309.4" fill="none" stroke="#000" stroke-width="1.1"/>
<line x1="232" y1="319.4" x2="236" y2="319.4" stroke="#000" stroke-width="1"/>
<text x="229" y="323.4" text-anchor="end" font-size="10.5" font-family="Liberation Sans">40</text>
<polyline points="236,300.6 249.5,290.6 534.0,290.6" fill="none" stroke="#000" stroke-width="1.1"/>
<line x1="232" y1="300.6" x2="236" y2="300.6" stroke="#000" stroke-width="1"/>
<text x="229" y="304.6" text-anchor="end" font-size="10.5" font-family="Liberation Sans">60</text>
<polyline points="236,281.8 249.5,271.8 534.0,271.8" fill="none" stroke="#000" stroke-width="1.1"/>
<line x1="232" y1="281.8" x2="236" y2="281.8" stroke="#000" stroke-width="1"/>
<text x="229" y="285.8" text-anchor="end" font-size="10.5" font-family="Liberation Sans">80</text>
<polyline points="236,263.0 249.5,253.0 534.0,253.0" fill="none" stroke="#8a8a8a" stroke-width="1.1"/>
<line x1="232" y1="263.0" x2="236" y2="263.0" stroke="#000" stroke-width="1"/>
<text x="229" y="267.0" text-anchor="end" font-size="10.5" font-family="Liberation Sans">100</text>
<line x1="232" y1="357" x2="236" y2="357" stroke="#000" stroke-width="1"/>
<text x="229" y="361" text-anchor="end" font-size="10.5" font-family="Liberation Sans">0</text>
<line x1="236" y1="263.0" x2="236" y2="357" stroke="#000" stroke-width="1.2"/>
<line x1="236" y1="357" x2="520.5" y2="357" stroke="#000" stroke-width="1.2"/>
<line x1="520.5" y1="357" x2="534.0" y2="347" stroke="#000" stroke-width="1"/>
<line x1="534.0" y1="347" x2="537.0" y2="347" stroke="#000" stroke-width="1"/>
<line x1="236.0" y1="357" x2="236.0" y2="360.5" stroke="#000" stroke-width="1"/>
<line x1="276.64285714285717" y1="357" x2="276.64285714285717" y2="360.5" stroke="#000" stroke-width="1"/>
<line x1="317.2857142857143" y1="357" x2="317.2857142857143" y2="360.5" stroke="#000" stroke-width="1"/>
<line x1="357.92857142857144" y1="357" x2="357.92857142857144" y2="360.5" stroke="#000" stroke-width="1"/>
<line x1="398.57142857142856" y1="357" x2="398.57142857142856" y2="360.5" stroke="#000" stroke-width="1"/>
<line x1="439.2142857142857" y1="357" x2="439.2142857142857" y2="360.5" stroke="#000" stroke-width="1"/>
<line x1="479.8571428571429" y1="357" x2="479.8571428571429" y2="360.5" stroke="#000" stroke-width="1"/>
<line x1="520.5" y1="357" x2="520.5" y2="360.5" stroke="#000" stroke-width="1"/>
<text x="255.32142857142856" y="374" text-anchor="middle" font-size="10.5" font-family="Liberation Sans">Янв</text>
<polygon points="268.0,292.3 273.0,288.3 273.0,351 268.0,355" fill="#4f4f8f" stroke="#000" stroke-width="1.3" stroke-linejoin="round"/>
<polygon points="251.5,292.3 256.5,288.3 273.0,288.3 268.0,292.3" fill="#7272c4" stroke="#000" stroke-width="1.3" stroke-linejoin="round"/>
<rect x="251.5" y="292.3" width="16.5" height="62.69999999999999" fill="#9999ff" stroke="#000" stroke-width="1.3"/>
<text x="295.9642857142857" y="374" text-anchor="middle" font-size="10.5" font-family="Liberation Sans">Фев</text>
<polygon points="308.64285714285717,301.8 313.64285714285717,297.8 313.64285714285717,351 308.64285714285717,355" fill="#4f4f8f" stroke="#000" stroke-width="1.3" stroke-linejoin="round"/>
<polygon points="292.14285714285717,301.8 297.14285714285717,297.8 313.64285714285717,297.8 308.64285714285717,301.8" fill="#7272c4" stroke="#000" stroke-width="1.3" stroke-linejoin="round"/>
<rect x="292.14285714285717" y="301.8" width="16.5" height="53.19999999999999" fill="#9999ff" stroke="#000" stroke-width="1.3"/>
<text x="336.6071428571429" y="374" text-anchor="middle" font-size="10.5" font-family="Liberation Sans">Мар</text>
<polygon points="349.2857142857143,309.4 354.2857142857143,305.4 354.2857142857143,351 349.2857142857143,355" fill="#4f4f8f" stroke="#000" stroke-width="1.3" stroke-linejoin="round"/>
<polygon points="332.7857142857143,309.4 337.7857142857143,305.4 354.2857142857143,305.4 349.2857142857143,309.4" fill="#7272c4" stroke="#000" stroke-width="1.3" stroke-linejoin="round"/>
<rect x="332.7857142857143" y="309.4" width="16.5" height="45.60000000000002" fill="#9999ff" stroke="#000" stroke-width="1.3"/>
<text x="377.25" y="374" text-anchor="middle" font-size="10.5" font-family="Liberation Sans">Апр</text>
<polygon points="389.92857142857144,284.7 394.92857142857144,280.7 394.92857142857144,351 389.92857142857144,355" fill="#4f4f8f" stroke="#000" stroke-width="1.3" stroke-linejoin="round"/>
<polygon points="373.42857142857144,284.7 378.42857142857144,280.7 394.92857142857144,280.7 389.92857142857144,284.7" fill="#7272c4" stroke="#000" stroke-width="1.3" stroke-linejoin="round"/>
<rect x="373.42857142857144" y="284.7" width="16.5" height="70.30000000000001" fill="#9999ff" stroke="#000" stroke-width="1.3"/>
<text x="417.89285714285717" y="374" text-anchor="middle" font-size="10.5" font-family="Liberation Sans">Май</text>
<polygon points="430.57142857142856,289.45 435.57142857142856,285.45 435.57142857142856,351 430.57142857142856,355" fill="#4f4f8f" stroke="#000" stroke-width="1.3" stroke-linejoin="round"/>
<polygon points="414.07142857142856,289.45 419.07142857142856,285.45 435.57142857142856,285.45 430.57142857142856,289.45" fill="#7272c4" stroke="#000" stroke-width="1.3" stroke-linejoin="round"/>
<rect x="414.07142857142856" y="289.45" width="16.5" height="65.55000000000001" fill="#9999ff" stroke="#000" stroke-width="1.3"/>
<text x="458.53571428571433" y="374" text-anchor="middle" font-size="10.5" font-family="Liberation Sans">Июн</text>
<polygon points="471.2142857142857,270.45 476.2142857142857,266.45 476.2142857142857,351 471.2142857142857,355" fill="#4f4f8f" stroke="#000" stroke-width="1.3" stroke-linejoin="round"/>
<polygon points="454.7142857142857,270.45 459.7142857142857,266.45 476.2142857142857,266.45 471.2142857142857,270.45" fill="#7272c4" stroke="#000" stroke-width="1.3" stroke-linejoin="round"/>
<rect x="454.7142857142857" y="270.45" width="16.5" height="84.55000000000001" fill="#9999ff" stroke="#000" stroke-width="1.3"/>
<text x="499.17857142857144" y="374" text-anchor="middle" font-size="10.5" font-family="Liberation Sans">Июл</text>
<polygon points="511.8571428571429,265.7 516.8571428571429,261.7 516.8571428571429,351 511.8571428571429,355" fill="#4f4f8f" stroke="#000" stroke-width="1.3" stroke-linejoin="round"/>
<polygon points="495.3571428571429,265.7 500.3571428571429,261.7 516.8571428571429,261.7 511.8571428571429,265.7" fill="#7272c4" stroke="#000" stroke-width="1.3" stroke-linejoin="round"/>
<rect x="495.3571428571429" y="265.7" width="16.5" height="89.30000000000001" fill="#9999ff" stroke="#000" stroke-width="1.3"/>
<text x="544.5" y="356" font-size="10.5" font-family="Liberation Sans">Продажи</text>
<text x="400" y="183" text-anchor="middle" font-size="11.5" font-weight="bold" font-family="Liberation Sans">Продажи по месяцам</text>
</svg>
<svg class="a" style="left:0;top:0" width="672" height="512" viewBox="0 0 672 512" shape-rendering="crispEdges">
<rect x="206" y="203" width="6" height="6" fill="#000"/>
<rect x="397" y="203" width="6" height="6" fill="#000"/>
<rect x="589" y="203" width="6" height="6" fill="#000"/>
<rect x="206" y="314" width="6" height="6" fill="#000"/>
<rect x="589" y="314" width="6" height="6" fill="#000"/>
<rect x="206" y="425" width="6" height="6" fill="#000"/>
<rect x="397" y="425" width="6" height="6" fill="#000"/>
<rect x="589" y="425" width="6" height="6" fill="#000"/>
<rect x="208" y="205" width="385" height="3" fill="url(#chk)"/>
<rect x="208" y="426" width="385" height="3" fill="url(#chk)"/>
<rect x="208" y="205" width="3" height="224" fill="url(#chk)"/>
<rect x="590" y="205" width="3" height="224" fill="url(#chk)"/>
</svg>
</body></html>
